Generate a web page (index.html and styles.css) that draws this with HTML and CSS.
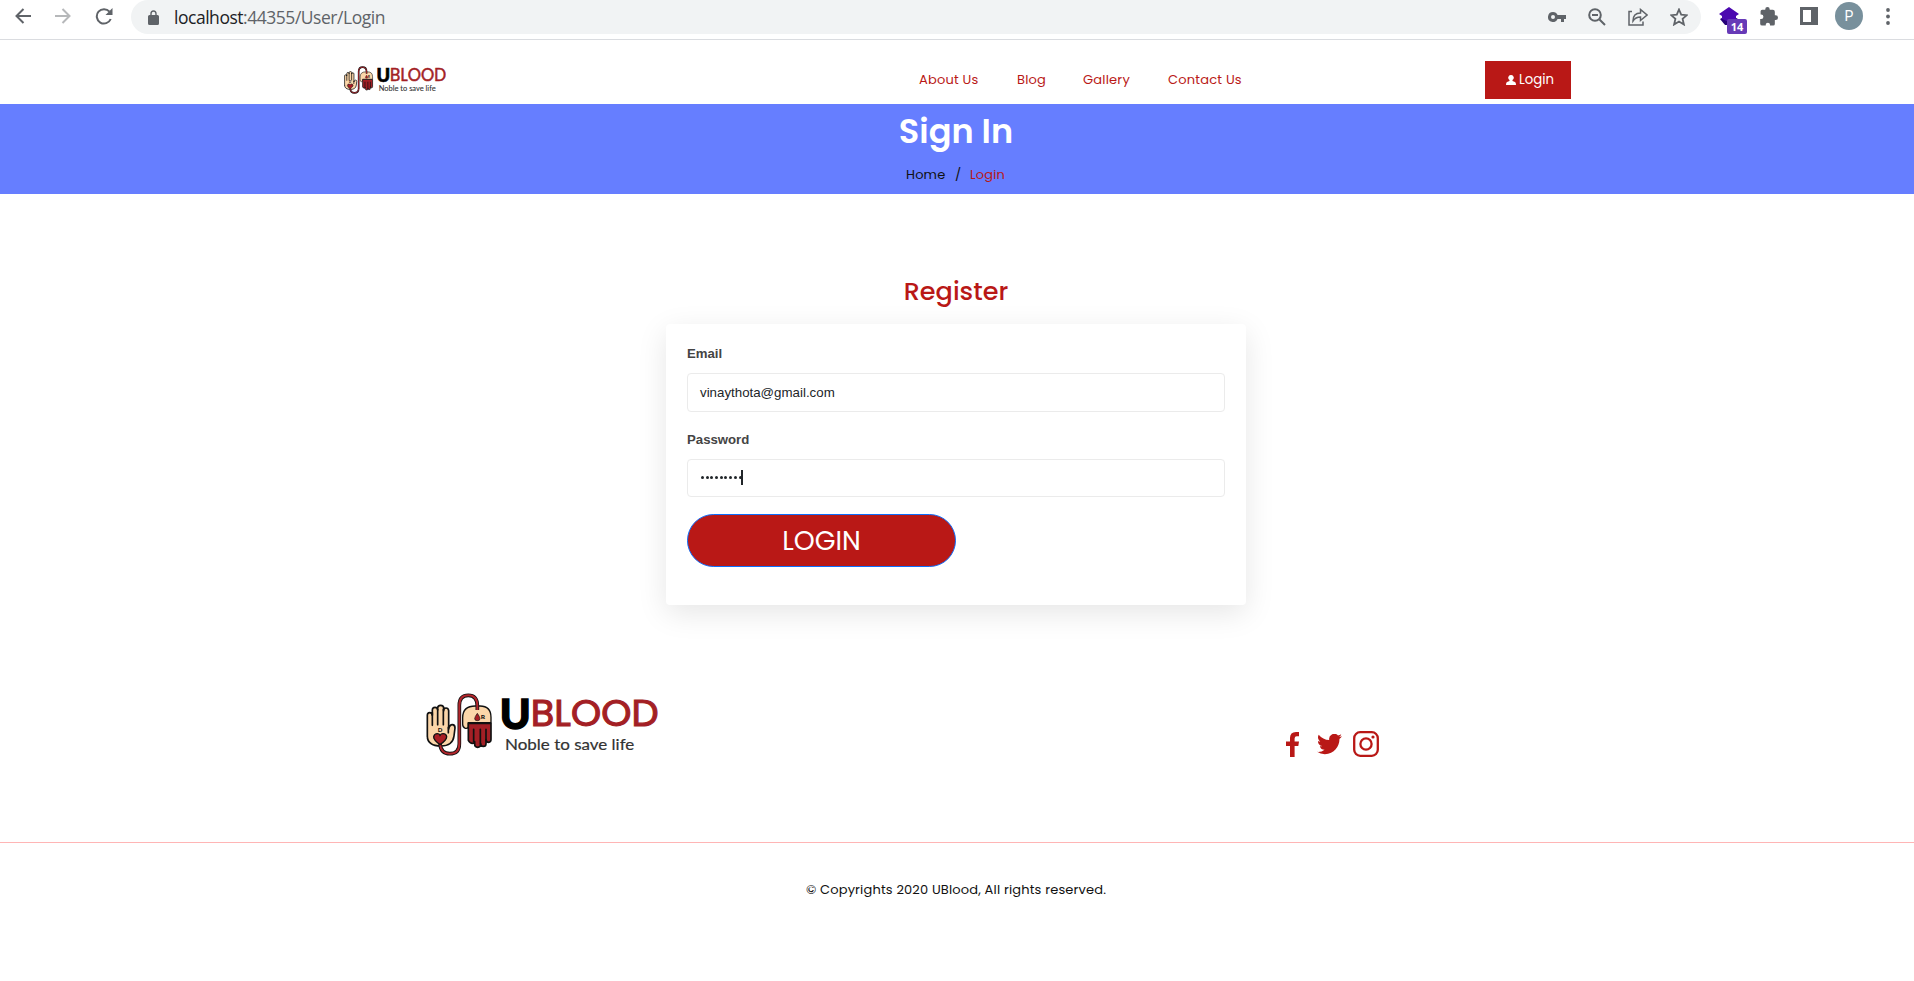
FILE: index.html
```
<!DOCTYPE html>
<html lang="en">
<head>
<meta charset="utf-8">
<title>UBlood - Sign In</title>
<link rel="stylesheet" href="styles.css">
</head>
<body>
<svg class="defs" aria-hidden="true">
  <symbol id="logo" viewBox="48 39 696 189">
    <path d="M52 170V106q0-8 7-8t8 8V90q0-8 8-8t8 8V84q0-8 9-8t9 8v8q0-8 7-8t8 8v55q3-13 11-13t8 10l-3 24q-4 30-39 30-41 0-41-30Z" fill="#fbd6a9" stroke="#111" stroke-width="5" stroke-linejoin="round"/>
    <path d="M67 98v38M83 88v46M100 88v46M115 142v16" fill="none" stroke="#111" stroke-width="5" stroke-linecap="round"/>
    <path d="M175 128v12q-2 6-9 5-8-2-8-12v-20q0-35 38-35h14q33 0 33 34v16Z" fill="#fbd6a9" stroke="#111" stroke-width="4"/>
    <path d="M175 130h68v48q0 9-7 9t-8-8v12q0 8-8 8t-8-8v2q0 9-9 9t-9-9v-8q0 5-7 5t-12-9Z" fill="#a31f25" stroke="#111" stroke-width="5" stroke-linejoin="round"/>
    <path d="M191 148v38M211 148v44M228 148v34" stroke="#111" stroke-width="5" stroke-linecap="round"/>
    <path d="M90 192q3 29 29 29 29 0 29-30V76q0-30 27-30t27 32v12" fill="none" stroke="#111" stroke-width="11"/>
    <path d="M90 192q3 29 29 29 29 0 29-30V76q0-30 27-30t27 32v12" fill="none" stroke="#b3262c" stroke-width="6"/>
    <path d="M90 194q-20-14-19-24 2-9 11-9 6 0 8 5 3-5 9-5 10 0 11 9 0 10-20 24Z" fill="#a91d24" stroke="#111" stroke-width="4"/>
    <path d="M202 100q-8 11-8 16 0 6 8 6t8-6q0-5-8-16Z" fill="#a91d24" stroke="#111" stroke-width="2"/>
    <text x="83" y="155" class="logo-mark" textLength="14" lengthAdjust="spacingAndGlyphs">D</text>
    <text x="212" y="118" class="logo-mark" textLength="13" lengthAdjust="spacingAndGlyphs">R</text>
    <text x="269" y="146" class="logo-u" textLength="93" lengthAdjust="spacingAndGlyphs">U</text>
    <text x="362" y="139" class="logo-blood" textLength="384" lengthAdjust="spacing">BLOOD</text>
    <text x="285" y="209" class="logo-tag" textLength="388" lengthAdjust="spacingAndGlyphs">Noble to save life</text>
  </symbol>
</svg>

<div class="browser">
  <div class="nav-tools">
    <svg width="16" height="16" viewBox="0 0 16 16" class="line"><path d="M16 8H1.500M8.500 1 1.500 8l7 7"/></svg>
    <svg width="16" height="16" viewBox="0 0 16 16" class="line faded"><path d="M0 8h14.500M7.500 1l7 7-7 7"/></svg>
    <svg width="18" height="17" viewBox="0 0 18 17" class="line"><path d="M14.500 3.700A7.200 7.200 0 1 0 15.700 11"/><path d="M17.500 0v7h-7Z" class="solid"/></svg>
  </div>
  <div class="address">
    <svg width="11" height="15" viewBox="0 0 11 15"><path d="M1.500 5H2.300V3.800a3.200 3.500 0 0 1 6.400 0V5h.8A1.500 1.500 0 0 1 11 6.500v7A1.500 1.500 0 0 1 9.500 15h-8A1.500 1.500 0 0 1 0 13.500v-7A1.500 1.500 0 0 1 1.500 5Zm2.200 0h3.600V3.800a1.800 2.100 0 0 0-3.600 0Z" class="grey"/></svg>
    <div class="url"><span class="host">localhost</span>:44355/User/Login</div>
    <div class="address-tools">
      <svg width="18" height="10" viewBox="0 0 18 10"><path d="M5 0a5 5 0 1 0 4.600 7H13v3h3V7h2V3H9.600A5 5 0 0 0 5 0Zm0 3a2 2 0 1 1 0 4 2 2 0 0 1 0-4Z" class="grey"/></svg>
      <svg width="18" height="18" viewBox="0 0 18 18" class="line"><circle cx="7" cy="7" r="5.800"/><path d="m11.500 11.500 5.500 5.500M4 7h6"/></svg>
      <svg width="20" height="18" viewBox="0 0 20 18" class="line thin"><path d="M4 3.500H1V17h14v-3.500M5 13q0-8 7.500-8V1.500L19 7l-6.500 5.500V9Q7.500 9 5 13Z"/></svg>
      <svg width="18" height="18" viewBox="0 0 18 18" class="line star"><path d="m9 1.500 2.200 5.200 5.600.5-4.200 3.700 1.300 5.600L9 13.500l-4.900 3 1.300-5.600L1.200 7.200l5.600-.5Z"/></svg>
    </div>
  </div>
  <div class="extensions">
    <div class="stack">
      <svg width="22" height="20" viewBox="0 0 22 20"><path d="M1 12 10 7l9 5-8 6H6Z" fill="#250078"/><path d="M10 0 20 7 17 9v3l-7 3-7-3V9L0 7Z" fill="#4b08b0"/></svg>
      <span class="count">14</span>
    </div>
    <svg width="19" height="19" viewBox="0 0 24 24" class="puzzle"><path class="grey" d="M21 10.500h-1V6q0-2.500-2.500-2.500H13.500V2.800a2.800 2.800 0 0 0-5.600 0v.7H4Q2 3.500 2 5.500v4h.7a2.900 2.900 0 0 1 0 5.800H1.500V21q0 2.500 2.500 2.500h4.500v-1a2.700 2.700 0 0 1 5.400 0v1H18q2 0 2-2v-5h1a3 3 0 0 0 0-6Z"/></svg>
    <svg width="18" height="18" viewBox="0 0 18 18" class="panel"><path class="grey" d="M0 0h18v18H0Zm3 3v12h8V3Z" fill-rule="evenodd"/></svg>
    <span class="avatar">P</span>
    <svg width="4" height="17" viewBox="0 0 4 17"><g class="grey"><circle cx="2" cy="2" r="1.900"/><circle cx="2" cy="8.500" r="1.900"/><circle cx="2" cy="15" r="1.900"/></g></svg>
  </div>
</div>

<header class="site-header">
  <svg class="header-logo"><use href="#logo"/></svg>
  <nav class="menu">
    <a class="m-about">About Us</a><a class="m-blog">Blog</a><a class="m-gallery">Gallery</a><a class="m-contact">Contact Us</a>
  </nav>
  <a class="login-link">
    <svg width="10" height="10" viewBox="0 0 10 10"><path fill="#fff" d="M5 0a2.700 2.700 0 0 1 1.500 5v1L9 7q1 .5 1 3H0Q0 7.500 1 7l2.500-1V5A2.700 2.700 0 0 1 5 0Z"/></svg>
    <span>Login</span>
  </a>
</header>

<section class="banner">
  <h1>Sign In</h1>
  <div class="crumbs"><span class="home">Home</span><span class="slash">/</span><span class="here">Login</span></div>
</section>

<main>
  <h2>Register</h2>
  <form class="card">
    <label>Email</label>
    <div class="field">vinaythota@gmail.com</div>
    <label>Password</label>
    <div class="field password"><span class="dots"><i></i><i></i><i></i><i></i><i></i><i></i><i></i><i></i><i></i></span><span class="caret"></span></div>
    <div class="submit"><span>LOGIN</span></div>
  </form>
</main>

<footer>
  <div class="footer-top">
    <svg class="footer-logo"><use href="#logo"/></svg>
    <div class="social">
      <svg width="13" height="25" viewBox="0 0 13 25"><path d="M4 25V14H0V9.500h4V6q0-6 6-6h3v4.200h-2.200Q8.600 4.200 8.600 6.500v3H13L12.300 14H8.600v11Z"/></svg>
      <svg width="25" height="21" viewBox="0 2.500 24 20"><path d="M23.950 4.570a10 10 0 0 1-2.820.78 4.960 4.960 0 0 0 2.160-2.730c-.95.560-2 .960-3.130 1.190a4.920 4.920 0 0 0-8.380 4.480A13.900 13.900 0 0 1 1.640 3.160a4.920 4.920 0 0 0 1.520 6.570 4.900 4.900 0 0 1-2.230-.61v.06a4.920 4.920 0 0 0 3.950 4.830 5 5 0 0 1-2.210.08 4.940 4.940 0 0 0 4.600 3.420A9.870 9.870 0 0 1 0 19.540a14 14 0 0 0 7.550 2.210c9.050 0 14-7.500 14-13.980l-.02-.63a9.900 9.900 0 0 0 2.420-2.570Z"/></svg>
      <svg width="26" height="26" viewBox="0 0 26 26"><g fill="none" stroke="#b91816" stroke-width="2.300"><rect x="1.200" y="1.200" width="23.600" height="23.600" rx="6"/><circle cx="13" cy="13" r="5.600"/></g><circle cx="20" cy="6" r="1.600"/></svg>
    </div>
  </div>
  <p class="copyright"><span>© Copyrights 2020 UBlood, All rights reserved.</span></p>
</footer>
</body>
</html>
```
FILE: styles.css
```
* { box-sizing: border-box; }
body { margin: 0; background: #fff; color: #111; font-family: Poppins, Inter, sans-serif; white-space: nowrap; overflow: hidden; }
svg { display: block; flex: none; }
.defs { display: none; }

/* Logo lettering */
.logo-mark { font: 900 19px Lato, sans-serif; fill: #111; }
.logo-u { font: 900 123px Lato, sans-serif; fill: #000; stroke: #000; stroke-width: 4; }
.logo-blood { font: 400 115px Poppins, Lato, sans-serif; fill: #a31f25; stroke: #a31f25; stroke-width: 3.5; }
.logo-tag { font: 400 48px Lato, sans-serif; fill: #333; stroke: #333; stroke-width: .6; }

/* Browser bar */
.browser { display: flex; height: 40px; border-bottom: 1px solid #dadce0; }
.grey { fill: #5f6368; }
.line { fill: none; stroke: #5f6368; stroke-width: 2; }
.line.thin { stroke-width: 1.5; }
.line.star { stroke-width: 1.8; }
.line .solid { fill: #5f6368; stroke: none; }
.faded { opacity: .45; }
.nav-tools { display: flex; width: 131px; height: 32px; padding-left: 15px; align-items: center; gap: 24px; }
.address { display: flex; width: 1570px; height: 34px; padding: 0 13px 0 17px; align-items: center; background: #f1f3f4; border-radius: 17px; }
.url { margin: -1px auto 0 15px; font: 400 17.500px "Open Sans", sans-serif; letter-spacing: -.47px; color: #5f6368; }
.host { color: #202124; }
.address-tools { display: flex; gap: 22px; align-items: center; margin-top: -1px; }
.extensions { display: flex; height: 32px; padding-left: 18px; align-items: center; }
.stack { position: relative; width: 40px; height: 20px; margin-top: 1px; }
.count { position: absolute; left: 8px; top: 12px; width: 20px; height: 15px; border-radius: 2px; background: #673ab7; color: #fff; font: 700 11px/16px "Open Sans", sans-serif; text-align: center; }
.panel { margin-left: 22px; }
.avatar { width: 28px; height: 28px; margin: 0 23px 0 17px; border-radius: 50%; background: #78909c; color: #fff; font: 400 14px/28px Roboto, sans-serif; text-align: center; }

/* Site header */
.site-header { display: flex; height: 64px; padding-left: 344px; }
.header-logo { width: 102px; height: 28px; margin: 26px 0 0; }
.menu { display: flex; gap: 38px; width: 1039px; padding-left: 473px; font-size: 13px; letter-spacing: .2px; line-height: 79px; color: #b91816; }
.m-about { width: 60px; }
.m-blog { width: 28px; }
.m-gallery { width: 47px; }
.m-contact { width: 74px; }
.login-link { display: flex; align-items: center; gap: 3px; width: 86px; height: 38px; margin-top: 21px; padding-left: 21px; background: #b91816; color: #fff; font-size: 13.300px; }

/* Banner */
.banner { height: 90px; background: #667eff; text-align: center; }
h1 { margin: 0; padding: 8px 2px 0 0; font-size: 33.600px; line-height: 40px; font-weight: 600; color: #fff; }
.crumbs { display: flex; gap: 10px; padding-left: 906px; margin-top: 13px; font-size: 13px; letter-spacing: .15px; line-height: 20px; }
.home { width: 39px; }
.slash { width: 5px; }
.here { color: #b91816; }

/* Sign in form */
main { padding-top: 79px; }
h2 { margin: 0; padding-right: 2px; text-align: center; font-size: 25.500px; line-height: 36px; font-weight: 500; color: #b91816; }
.card { width: 580px; height: 281px; margin: 15px 0 0 666px; padding: 20px 21px 0; border-radius: 4px; box-shadow: 0 8px 30px rgba(0, 0, 0, .1); font-family: "Liberation Sans", Arial, sans-serif; font-size: 13.300px; }
label { display: block; margin-bottom: 10px; line-height: 19px; font-size: 13.200px; font-weight: 700; color: #444; }
.field { display: flex; align-items: center; height: 39px; margin-bottom: 18px; padding-left: 12px; border: 1px solid #ebebeb; border-radius: 4px; color: #212529; }
.password { height: 38px; padding: 0 0 2px 13px; margin-bottom: 17px; }
.dots { display: flex; gap: 1.700px; }
.dots i { width: 3px; height: 3px; border-radius: 50%; background: #212529; }
.caret { width: 2px; height: 15px; margin-left: -1px; background: #212529; }
.submit { width: 269px; height: 53px; border: 1px solid #0d6efd; border-radius: 27px; background: #b91816; color: #fff; text-align: center; font: 400 26.700px/52px Poppins, Inter, sans-serif; }

/* Footer */
.footer-top { display: flex; height: 237px; padding: 88px 0 0 426px; }
.footer-logo { width: 232px; height: 63px; }
.social { display: flex; align-items: center; gap: 18px; height: 26px; margin: 38px 0 0 628px; fill: #b91816; }
.social svg:last-child { margin-left: -7px; }
.copyright { margin: 0; padding: 36px 2px 0 0; border-top: 1px solid #ffb5b5; text-align: center; font-size: 13px; letter-spacing: .16px; line-height: 21px; }
```
